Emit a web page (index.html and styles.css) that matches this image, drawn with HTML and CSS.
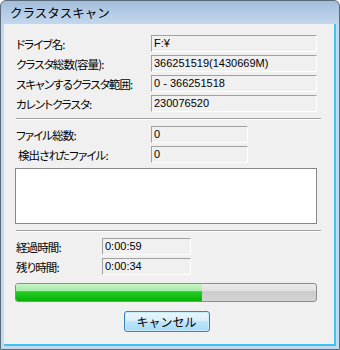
FILE: index.html
```html
<!DOCTYPE html>
<html lang="ja">

<head>
	<meta charset="UTF-8">
	<meta name="viewport" content="width=device-width, initial-scale=1.0">
	<title>クラスタスキャン</title>
	<link rel="stylesheet" href="styles.css">
</head>

<body>
	<div class="window">
		<div class="titlebar">クラスタスキャン</div>
		<div class="client">
			<div class="group">
				<div class="row">
					<span class="label">ドライブ名:</span>
					<span class="field wide">F:¥</span>
				</div>
				<div class="row">
					<span class="label">クラスタ総数(容量):</span>
					<span class="field wide">366251519(1430669M)</span>
				</div>
				<div class="row">
					<span class="label">スキャンするクラスタ範囲:</span>
					<span class="field wide">0 - 366251518</span>
				</div>
				<div class="row">
					<span class="label">カレントクラスタ:</span>
					<span class="field wide">230076520</span>
				</div>
			</div>

			<div class="sep"></div>

			<div class="group">
				<div class="row">
					<span class="label">ファイル総数:</span>
					<span class="field mid">0</span>
				</div>
				<div class="row">
					<span class="label indent">検出されたファイル:</span>
					<span class="field mid">0</span>
				</div>
			</div>
			<div class="list"></div>

			<div class="sep"></div>

			<div class="group">
				<div class="row">
					<span class="label short">経過時間:</span>
					<span class="field small">0:00:59</span>
				</div>
				<div class="row">
					<span class="label short">残り時間:</span>
					<span class="field small">0:00:34</span>
				</div>
			</div>

			<div class="progress">
				<div class="fill" style="width: 62%"></div>
			</div>

			<div class="buttons">
				<button class="btn" type="button">キャンセル</button>
			</div>
		</div>
	</div>
</body>

</html>
```

FILE: styles.css
```css
body {
	margin: 0;
	font-family: "Liberation Sans", "Noto Sans CJK JP", sans-serif;
	font-size: 12px;
	color: #000;
}

.window {
	width: 340px;
	height: 350px;
	box-sizing: border-box;
	border: 1px solid #5a6b7c;
	border-radius: 6px 6px 0 0;
	background: linear-gradient(#a3bedb, #c4d9ee 24px, #c4d9ee);
	padding: 0 3px 3px 3px;
	display: flex;
	flex-direction: column;
}

.titlebar {
	height: 23px;
	line-height: 24px;
	padding-left: 6px;
	font-family: "Noto Sans CJK JP", sans-serif;
	font-size: 12.5px;
	flex-shrink: 0;
}

.client {
	flex: 1;
	background-color: #f0f0f0;
	border-right: 2px solid #3cc3ee;
	border-bottom: 2px solid #3cc3ee;
	padding: 11px 0 0 11px;
}

.group {
	display: flex;
	flex-direction: column;
	gap: 3px;
}

.row {
	display: flex;
	align-items: center;
}

.label {
	width: 135px;
	font-family: "Noto Sans CJK JP", sans-serif;
	font-feature-settings: "palt";
	font-size: 11.5px;
	letter-spacing: -0.9px;
	padding-left: 1px;
}

.label.indent {
	padding-left: 3px;
	width: 133px;
}

.label.short {
	width: 86px;
}

.field {
	display: block;
	box-sizing: border-box;
	height: 17px;
	line-height: 15px;
	padding-left: 2px;
	font-size: 11px;
	border-top: 1px solid #a0a0a0;
	border-left: 1px solid #a0a0a0;
	border-right: 1px solid #fff;
	border-bottom: 1px solid #fff;
	white-space: nowrap;
}

.field.wide {
	width: 166px;
}

.field.mid {
	width: 97px;
}

.field.small {
	width: 89px;
}

.sep {
	width: 305px;
	margin: 6px 0 6px 1px;
	border-top: 1px solid #a0a0a0;
	border-bottom: 1px solid #fff;
}

.list {
	width: 302px;
	height: 56px;
	box-sizing: border-box;
	margin-top: 5px;
	background-color: #fff;
	border: 1px solid #888;
}

.progress {
	width: 302px;
	height: 19px;
	box-sizing: border-box;
	margin-top: 8px;
	border: 1px solid #8c8c8c;
	border-radius: 3px;
	background: linear-gradient(#ececec, #e0e0e0 40%, #cbcbcb 45%, #d4d4d4);
	overflow: hidden;
}

.fill {
	height: 100%;
	background: linear-gradient(#c9f4c9, #a6eca6 40%, #25cd25 45%, #06b206);
}

.buttons {
	width: 302px;
	display: flex;
	justify-content: center;
	margin-top: 9px;
}

.btn {
	width: 86px;
	height: 21px;
	margin-left: 1px;
	border: 1px solid #3c7fb1;
	border-radius: 3px;
	background: linear-gradient(#eaf6fd, #d9f0fc 45%, #bee6fd 50%, #a7d9f5);
	box-shadow: inset 0 0 0 1px #c8ecfb;
	font-family: "Noto Sans CJK JP", sans-serif;
	font-size: 12px;
	padding: 0;
	color: #000;
}
```
